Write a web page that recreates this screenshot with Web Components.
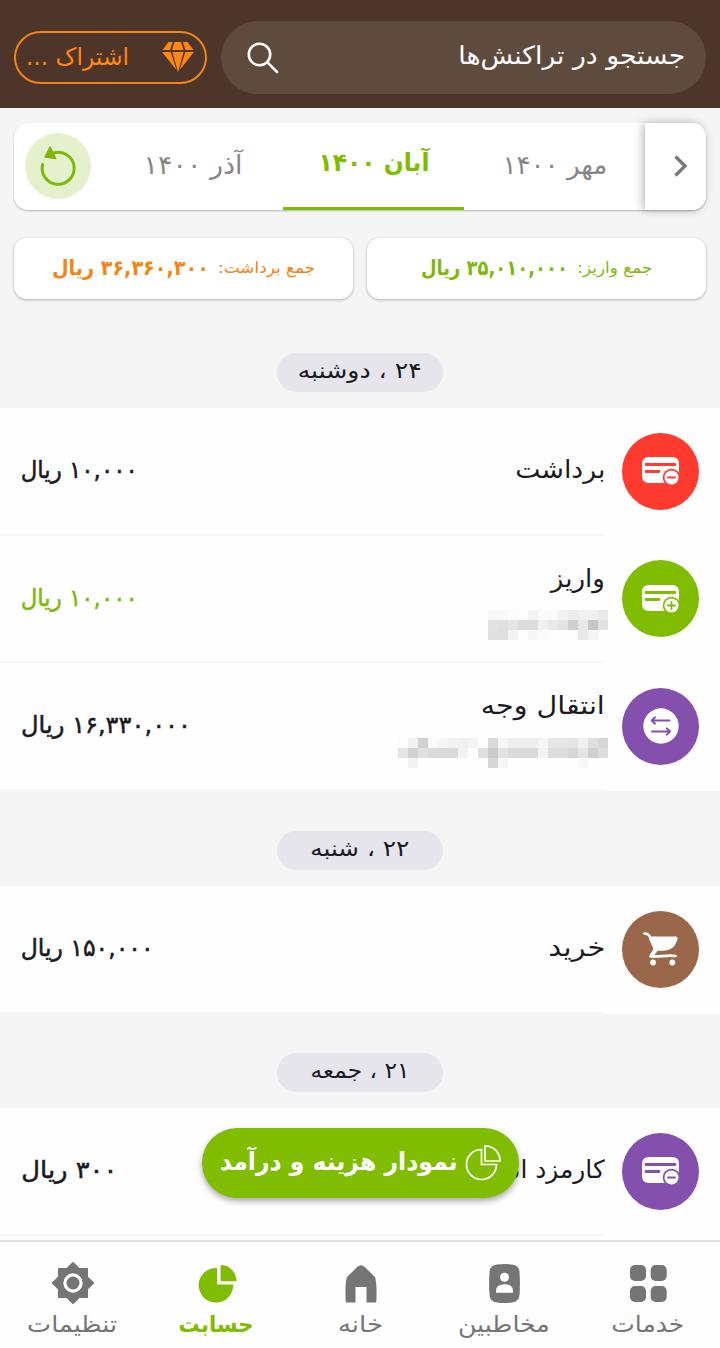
<!DOCTYPE html>
<html lang="fa" dir="rtl">
<head>
<meta charset="utf-8">
<title>تراکنش‌ها</title>
<style>
  body {
    margin: 0;
    background: #f5f5f5;
    color: #1a1a1e;
    font-family: "DejaVu Sans", sans-serif;
  }
</style>
</head>
<body>
<bank-app>
  <app-header slot="header"></app-header>
  <month-tabs></month-tabs>
  <sum-row></sum-row>

  <day-group label="۲۴ ، دوشنبه" w="124" style="margin-top: 54px">
    <tx-row icon="minus" color="#ff3b30" label="برداشت" w="90" amount="۱۰,۰۰۰ ریال" aw="117"></tx-row>
    <tx-row icon="plus" color="#80bc00" label="واریز" w="54" amount="۱۰,۰۰۰ ریال" aw="117" income>
      <pixel-strip cells="f8f8fbfcf3fbfaf2ecf0f0ea e2e0e5dcdcf0e8e4cee8c6e2 dfdff3fdf6fafdfdfde8f4fd"></pixel-strip>
    </tx-row>
    <tx-row icon="transfer" color="#844fad" label="انتقال وجه" w="124" amount="۱۶,۳۳۰,۰۰۰ ریال" aw="170">
      <pixel-strip style="margin: 12px -3px -5px 0" cells="fcf0d2fbf6f2f0f4fddaf6eeeeeef6e6e6e4f0ded6 e4d2e0dadadaf2fee0cae2dadadaf2dcdcd6e4d0dc fef3fefefefefefefed6f6fefefefefefefef8fefe"></pixel-strip>
    </tx-row>
  </day-group>

  <day-group label="۲۲ ، شنبه" w="99" style="margin-top: 40.5px">
    <tx-row icon="cart" color="#9b674a" label="خرید" w="57" amount="۱۵۰,۰۰۰ ریال" aw="133"></tx-row>
  </day-group>

  <day-group label="۲۱ ، جمعه" w="99" style="margin-top: 39.5px; --tail: 20px">
    <tx-row icon="minus" color="#844fad" label="کارمزد انتقال" w="137" amount="۳۰۰ ریال" aw="96"></tx-row>
  </day-group>

  <chart-button slot="float"></chart-button>
  <bottom-nav slot="nav"></bottom-nav>
</bank-app>

<script>
// one line of text, stretched or squeezed to the width in "w"
class FitText extends HTMLElement {
  constructor() {
    super();
    this.attachShadow({ mode: "open" });
  }

  connectedCallback() {
    this.shadowRoot.innerHTML = /* html */`
      <style>
        :host { display: block; flex: none; line-height: 36px; direction: rtl; }
        span { display: inline-block; white-space: nowrap; transform-origin: 100% 50%; }
      </style>
      <span><slot></slot></span>
    `;
    const w = Number(this.getAttribute("w"));
    const span = this.shadowRoot.querySelector("span");
    this.style.width = w + "px";
    span.style.transform = `scaleX(${w / span.getBoundingClientRect().width})`;
  }
}

class AppIcon extends HTMLElement {
  static card = `
    <path fill="currentColor" d="M7 0H30Q37 0 37 7V19Q37 26 30 26H7Q0 26 0 19V7Q0 0 7 0Z"/>
    <path stroke="var(--bg)" stroke-width="2.8" stroke-linecap="round" d="M4 7.5H33M4 14.5H17"/>
    <circle cx="29.5" cy="20.5" r="8.8" fill="var(--bg)"/>
    <circle cx="29.5" cy="20.5" r="7" fill="currentColor"/>`;

  static shapes = {
    minus: ["0 0 37 28", AppIcon.card + `<path stroke="var(--bg)" stroke-width="1.8" stroke-linecap="round" d="M26 20.5H33"/>`],
    plus: ["0 0 37 28", AppIcon.card + `<path stroke="var(--bg)" stroke-width="1.8" stroke-linecap="round" d="M26 20.5H33M29.5 17V24"/>`],
    transfer: ["0 0 36 36", `<circle cx="18" cy="18" r="17.7" fill="currentColor"/>
      <path fill="none" stroke="var(--bg)" stroke-width="1.9" stroke-linecap="round" stroke-linejoin="round"
        d="M26.5 12.5H9M12 9.3L8.7 12.5L12 15.7M9 23.5H26.5M23.7 20.3L27 23.5L23.7 26.7"/>`],
    cart: ["0 0 36 34", `<path fill="currentColor" d="M8.5 4.5H32.5Q35.5 4.8 34.3 8C32 15.5 26.5 18.7 20.5 18.7H14.8L11.5 22.8L10.5 24L6.5 24.3L11 17.5L6 7Z"/>
      <path fill="none" stroke="currentColor" stroke-width="2.7" stroke-linecap="round" stroke-linejoin="round" d="M1.5 1.5C5 1.5 6 2.5 7.2 5L12 17L7.5 24.5C17 25 25 22.8 32.5 24"/>
      <circle cx="10" cy="30.5" r="2.9" fill="currentColor"/><circle cx="29.3" cy="30.5" r="2.9" fill="currentColor"/>`],
    diamond: ["0 0 32 31", `<path fill="currentColor" d="M6.5 0H10.7L8 8H0.5ZM12.5 0H19L21.5 8H10ZM20.8 0H25.5L31.5 8H23.5ZM0 10H8.7L14.5 28ZM10.5 10H21.5L16 30.5ZM23.3 10H32L17.7 28Z"/>`],
    search: ["0 0 32 32", `<g fill="none" stroke="currentColor" stroke-width="2.6" stroke-linecap="round"><circle cx="12.5" cy="12.5" r="10.7"/><path d="M20.2 20.2L30 30"/></g>`],
    reload: ["0 0 36 40", `<path fill="none" stroke="currentColor" stroke-width="3" stroke-linecap="round" d="M2.6 18.5A16 16 0 1 0 14.5 6.7"/>
      <path fill="currentColor" stroke="currentColor" stroke-width="1.5" stroke-linejoin="round" d="M10 1L15.8 12.5L5 11Z"/>`],
    chevron: ["0 0 14 22", `<path fill="none" stroke="currentColor" stroke-width="3.2" d="M1.5 1.5L11 11L1.5 20.5"/>`],
    pieLine: ["0 0 36 36", `<g fill="none" stroke="currentColor" stroke-width="1.7"><path d="M15.5 4.5A15 15 0 1 0 30.5 19.5H15.5Z"/><path d="M19 .8V16H34C34 7.5 27.5 .8 19 .8Z"/></g>`],
    services: ["0 0 37 37", `<g fill="currentColor"><rect width="16" height="16" rx="5"/><rect x="20.7" width="16" height="16" rx="5"/><rect y="21" width="16" height="16" rx="5"/><rect x="20.7" y="21" width="16" height="16" rx="5"/></g>`],
    contacts: ["0 0 31 39", `<path fill="currentColor" d="M8 .6Q15.5-.5 23 .6Q30 1.2 30.5 8Q31.3 19.5 30.5 31Q30 37.8 23 38.4Q15.5 39.5 8 38.4Q1 37.8 .5 31Q-.3 19.5 .5 8Q1 1.2 8 .6Z"/>
      <circle cx="15.5" cy="13.3" r="4.5" fill="#fff"/><path fill="#fff" d="M7 28.8V27Q7 20.3 15.5 20.3T24 27V28.8Z"/>`],
    home: ["0 -1 32 38", `<path fill="currentColor" d="M2 12L12.5 1.8Q16 -1.2 19.5 1.8L30 12Q31.5 17 31.5 25V33Q31.5 36 31 37.5H21.5V22H10.5V37.5H1Q.5 36 .5 33V25Q.5 17 2 12Z"/>`],
    pie: ["-.5 -1 38 38", `<path fill="currentColor" d="M18.5 3A17.3 17.3 0 1 0 34.7 19.5H18.5Z"/><path fill="currentColor" d="M22 .5Q22 0 23 0C31 .5 37.5 7 38 15.5Q38 16.2 37 16.2H22Z"/>`],
    gear: ["0 0 42 42", `<path fill="currentColor" stroke="currentColor" stroke-width="2" stroke-linejoin="round" d="M21 1L27 7H35V15L41 21L35 27V35H27L21 41L15 35H7V27L1 21L7 15V7H15Z"/>
      <circle cx="21" cy="21" r="8.1" fill="none" stroke="#fff" stroke-width="3.2"/>`],
  };

  constructor() {
    super();
    this.attachShadow({ mode: "open" });
  }

  connectedCallback() {
    const [box, body] = AppIcon.shapes[this.getAttribute("name")];
    const [, , w, h] = box.split(" ");
    this.shadowRoot.innerHTML = /* html */`
      <style>
        :host { display: block; flex: none; }
        svg { display: block; overflow: visible; }
      </style>
      <svg width="${w}" height="${h}" viewBox="${box}">${body}</svg>
    `;
  }
}

class PixelStrip extends HTMLElement {
  constructor() {
    super();
    this.attachShadow({ mode: "open" });
  }

  connectedCallback() {
    const rows = this.getAttribute("cells").split(" ").map((r) => r.match(/../g));
    const cols = rows[0].length;
    this.shadowRoot.innerHTML = /* html */`
      <style>
        :host {
          display: grid;
          direction: ltr;
          grid-template-columns: repeat(${cols}, 10px);
          grid-auto-rows: 10px;
        }
      </style>
      ${rows.flat().map((c) => `<i style="background: #${c}${c}${c}"></i>`).join("")}
    `;
  }
}

class AppHeader extends HTMLElement {
  constructor() {
    super();
    this.attachShadow({ mode: "open" });
    this.shadowRoot.innerHTML = /* html */`
      <style>
        :host {
          display: flex;
          gap: 14px;
          box-sizing: border-box;
          height: 108px;
          padding: 21px 14px 14px;
          background: #4e3529;
        }
        .search {
          flex: 1;
          display: flex;
          align-items: center;
          justify-content: space-between;
          padding: 0 21px 0 26px;
          border-radius: 37px;
          background: #5f4b3d;
          color: white;
        }
        .plan {
          display: flex;
          align-items: center;
          justify-content: space-between;
          box-sizing: border-box;
          width: 193px;
          height: 53px;
          margin-top: 10px;
          padding: 0 11px 0 10px;
          border: 2px solid #f58410;
          border-radius: 27px;
          color: #ff870f;
        }
        fit-text { font-size: 25px; margin-bottom: 4px; }
        .plan fit-text { font-size: 24px; margin-bottom: 1px; }
      </style>
      <div class="search">
        <fit-text w="227">جستجو در تراکنش‌ها</fit-text>
        <app-icon name="search"></app-icon>
      </div>
      <div class="plan">
        <app-icon name="diamond"></app-icon>
        <fit-text w="103">اشتراک ...</fit-text>
      </div>
    `;
  }
}

class MonthTabs extends HTMLElement {
  constructor() {
    super();
    this.attachShadow({ mode: "open" });
    this.shadowRoot.innerHTML = /* html */`
      <style>
        :host {
          display: flex;
          height: 87px;
          margin: 15px 14px 0;
          border-radius: 14px;
          background: white;
          box-shadow: 0 1px 2px rgba(0, 0, 0, .28);
          color: #85858a;
          font-size: 26px;
        }
        .next {
          display: flex;
          align-items: center;
          justify-content: center;
          box-sizing: border-box;
          width: 61px;
          padding: 0 0 2px 11px;
          border-radius: 0 14px 14px 0;
          background: white;
          box-shadow: -2px 0 10px rgba(0, 0, 0, .28);
          color: #777;
        }
        .tab {
          display: flex;
          align-items: center;
          justify-content: center;
          box-sizing: border-box;
          width: 181px;
          padding-bottom: 4px;
        }
        .active {
          border-bottom: 3px solid #80bc00;
          color: #80bc00;
          font-weight: bold;
          font-size: 25px;
        }
        .reload {
          display: flex;
          align-items: center;
          justify-content: center;
          width: 66px;
          height: 66px;
          margin: 10px 11px 0 0;
          border-radius: 50%;
          background: #e5f0cd;
          color: #80b80a;
        }
      </style>
      <div class="next"><app-icon name="chevron"></app-icon></div>
      <div class="tab"><fit-text w="105">مهر ۱۴۰۰</fit-text></div>
      <div class="tab active"><fit-text w="111">آبان ۱۴۰۰</fit-text></div>
      <div class="tab"><fit-text w="99">آذر ۱۴۰۰</fit-text></div>
      <div class="reload"><app-icon name="reload"></app-icon></div>
    `;
  }
}

class SumRow extends HTMLElement {
  constructor() {
    super();
    this.attachShadow({ mode: "open" });
    this.shadowRoot.innerHTML = /* html */`
      <style>
        :host { display: flex; gap: 14px; margin: 28px 14px 0; }
        .card {
          flex: 1;
          display: flex;
          align-items: center;
          justify-content: center;
          gap: 9px;
          height: 61px;
          border-radius: 13px;
          background: white;
          box-shadow: 0 1px 3px rgba(0, 0, 0, .3);
        }
        .in { color: #80b80a; }
        .out { color: #f58410; }
        .name { font-size: 16px; margin-bottom: 2px; }
        .total { font-size: 21px; font-weight: bold; margin-bottom: 1px; }
      </style>
      <div class="card in">
        <fit-text class="name" w="75">جمع واریز:</fit-text>
        <fit-text class="total" w="147">۳۵,۰۱۰,۰۰۰ ریال</fit-text>
      </div>
      <div class="card out">
        <fit-text class="name" w="97">جمع برداشت:</fit-text>
        <fit-text class="total" w="157">۳۶,۳۶۰,۳۰۰ ریال</fit-text>
      </div>
    `;
  }
}

class DayGroup extends HTMLElement {
  constructor() {
    super();
    this.attachShadow({ mode: "open" });
  }

  connectedCallback() {
    this.shadowRoot.innerHTML = /* html */`
      <style>
        :host { display: block; }
        .day {
          display: flex;
          align-items: center;
          justify-content: center;
          width: 166px;
          height: 39px;
          margin: 0 auto 16px;
          border-radius: 20px;
          background: #e5e5eb;
          font-size: 22px;
        }
        fit-text { margin-bottom: 3px; }
        .rows { padding-bottom: var(--tail, 0); background: #fefefe; }
      </style>
      <div class="day"><fit-text w="${this.getAttribute("w")}">${this.getAttribute("label")}</fit-text></div>
      <div class="rows"><slot></slot></div>
    `;
  }
}

class TxRow extends HTMLElement {
  constructor() {
    super();
    this.attachShadow({ mode: "open" });
  }

  connectedCallback() {
    const at = (name) => this.getAttribute(name);
    this.shadowRoot.innerHTML = /* html */`
      <style>
        :host {
          display: flex;
          height: 127.5px;
          padding-right: 21px;
        }
        .badge {
          --bg: ${at("color")};
          display: flex;
          align-items: center;
          justify-content: center;
          width: 77px;
          height: 77px;
          margin: 24.5px 0 0 17px;
          border-radius: 50%;
          background: var(--bg);
          color: white;
        }
        .body {
          flex: 1;
          display: flex;
          align-items: center;
          justify-content: space-between;
          box-sizing: border-box;
          padding-left: 21px;
          border-bottom: 2px solid #f7f7f7;
        }
        .text { display: flex; flex-direction: column; align-items: flex-start; }
        .text fit-text { font-size: 25px; margin-bottom: 2px; }
        ::slotted(pixel-strip) { margin: 11px -3px -5px 0; }
        .amount { font-size: 24px; margin-bottom: 1px; -webkit-text-stroke: .5px currentColor; }
        :host([income]) .amount { color: #80b80a; }
      </style>
      <div class="badge"><app-icon name="${at("icon")}"></app-icon></div>
      <div class="body">
        <div class="text">
          <fit-text w="${at("w")}">${at("label")}</fit-text>
          <slot></slot>
        </div>
        <fit-text class="amount" w="${at("aw")}">${at("amount")}</fit-text>
      </div>
    `;
  }
}

class ChartButton extends HTMLElement {
  constructor() {
    super();
    this.attachShadow({ mode: "open" });
    this.shadowRoot.innerHTML = /* html */`
      <style>
        :host {
          display: flex;
          align-items: center;
          gap: 8px;
          box-sizing: border-box;
          width: 317px;
          height: 70px;
          padding: 0 17px;
          border-radius: 35px;
          background: #80bc00;
          box-shadow: 0 3px 6px rgba(0, 0, 0, .35);
          color: white;
          font-size: 25px;
          font-weight: bold;
        }
        fit-text { margin-bottom: 3px; }
      </style>
      <app-icon name="pieLine"></app-icon>
      <fit-text w="238">نمودار هزینه و درآمد</fit-text>
    `;
  }
}

class BottomNav extends HTMLElement {
  constructor() {
    super();
    this.attachShadow({ mode: "open" });
    const items = [
      ["services", "خدمات", 73],
      ["contacts", "مخاطبین", 92],
      ["home", "خانه", 45],
      ["pie", "حسابت", 75],
      ["gear", "تنظیمات", 90],
    ];
    this.shadowRoot.innerHTML = /* html */`
      <style>
        :host {
          display: flex;
          box-sizing: border-box;
          height: 108px;
          border-top: 2px solid #e0e0e0;
          background: #fefefe;
          color: #757575;
          font-size: 23px;
        }
        .item { flex: 1; display: flex; flex-direction: column; align-items: center; }
        .pic { display: flex; align-items: center; height: 42px; margin: 20px 0 2px 1px; }
        .on { color: #80bc00; font-weight: bold; }
      </style>
      ${items.map(([icon, label, w]) => `
        <div class="item ${icon === "pie" ? "on" : ""}">
          <div class="pic"><app-icon name="${icon}"></app-icon></div>
          <fit-text w="${w}">${label}</fit-text>
        </div>
      `).join("")}
    `;
  }
}

class BankApp extends HTMLElement {
  constructor() {
    super();
    this.attachShadow({ mode: "open" });
    this.shadowRoot.innerHTML = /* html */`
      <style>
        :host {
          display: flex;
          flex-direction: column;
          position: relative;
          width: 720px;
          height: 1348px;
          overflow: hidden;
          background: #f5f5f5;
        }
        main { flex: 1; min-height: 0; overflow: hidden; }
        .float { position: absolute; left: 201.5px; bottom: 150px; }
      </style>
      <slot name="header"></slot>
      <main><slot></slot></main>
      <div class="float"><slot name="float"></slot></div>
      <slot name="nav"></slot>
    `;
  }
}

customElements.define("fit-text", FitText);
customElements.define("app-icon", AppIcon);
customElements.define("pixel-strip", PixelStrip);
customElements.define("app-header", AppHeader);
customElements.define("month-tabs", MonthTabs);
customElements.define("sum-row", SumRow);
customElements.define("day-group", DayGroup);
customElements.define("tx-row", TxRow);
customElements.define("chart-button", ChartButton);
customElements.define("bottom-nav", BottomNav);
customElements.define("bank-app", BankApp);
</script>
</body>
</html>
